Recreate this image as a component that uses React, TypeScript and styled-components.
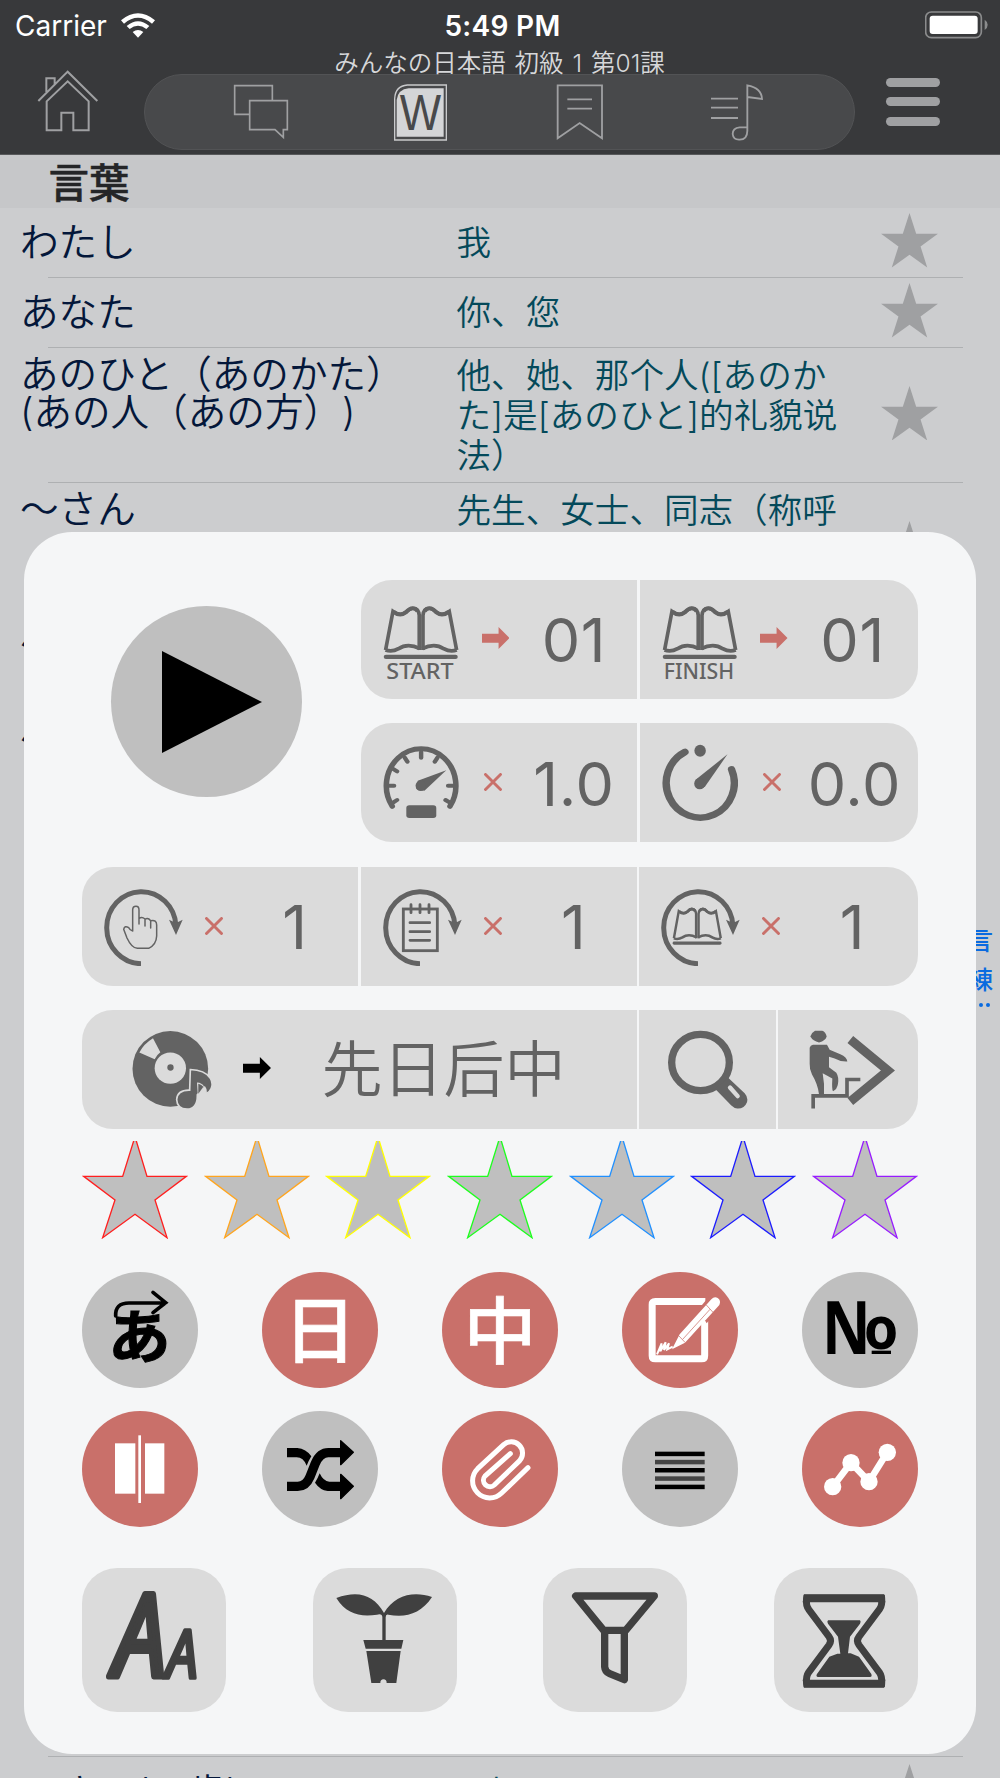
import React from 'react';
import styled, { createGlobalStyle } from 'styled-components';

const JP = `Inter, "Noto Sans CJK JP", sans-serif`;
const ZH = `Inter, "Noto Sans CJK SC", sans-serif`;
const INK = '#636363';
const TILE = '#dbdbdb';
const ACCENT = '#c9706a';

const GlobalStyle = createGlobalStyle`
  * { box-sizing: border-box; }
  body { margin: 0; background: #cccdcf; }
  svg { display: block; flex: none; }
`;

const Screen = styled.div`
  position: relative;
  width: 1000px;
  height: 1778px;
  overflow: hidden;
  background: #cccdcf;
  font-family: ${JP};
  text-spacing-trim: space-all;
`;

/* ---------- header ---------- */
const Header = styled.header`
  height: 155px;
  background: #38393b;
  border-bottom: 1px solid #58595b;
`;
const StatusBar = styled.div`
  display: grid;
  grid-template-columns: 1fr auto 1fr;
  align-items: center;
  height: 50px;
  padding: 1px 12px 0 15px;
  color: #fff;
  font-size: 28px;
`;
const Carrier = styled.div`
  display: flex;
  align-items: center;
  gap: 14px;
`;
const Clock = styled.div`
  padding-left: 2px;
  font-weight: 600;
  font-size: 28px;
  letter-spacing: 0.3px;
`;
const BatterySlot = styled.div`
  display: flex;
  justify-content: flex-end;
  padding-bottom: 2px;
`;
const NavRow = styled.div`
  display: grid;
  grid-template-columns: 144px 711px 1fr;
  height: 104px;
`;
const NavSide = styled.div<{ $left: number; $top: number }>`
  padding: ${p => p.$top}px 0 0 ${p => p.$left}px;
`;
const NavTitle = styled.div`
  height: 24px;
  line-height: 27px;
  text-align: center;
  font-size: 24.5px;
  font-weight: 350;
  word-spacing: 2px;
  color: #d6d7d9;
  white-space: nowrap;
`;
const TabPill = styled.nav`
  display: flex;
  align-items: center;
  justify-content: space-between;
  height: 76px;
  padding: 0 90px 0 87.5px;
  border: 1.5px solid #525355;
  border-radius: 38px;
  background: #48494b;
`;
const MenuBars = styled.div`
  display: flex;
  flex-direction: column;
  gap: 10.7px;
  width: 54px;
`;
const MenuBar = styled.i`
  height: 9px;
  border-radius: 5px;
  background: #9fa0a2;
`;

/* ---------- word list ---------- */
const SectionTitle = styled.h2`
  margin: 0;
  height: 52.5px;
  padding-left: 48.5px;
  line-height: 57px;
  font-size: 40.5px;
  font-weight: 500;
  -webkit-text-stroke: 0.5px #242527;
  color: #242527;
  background: #c6c7c9;
`;
const WordRow = styled.div<{ $h: number; $single?: boolean }>`
  display: grid;
  grid-template-columns: 436.5px 391.5px 1fr;
  grid-template-rows: 100%;
  align-items: ${p => (p.$single ? 'center' : 'start')};
  height: ${p => p.$h}px;
  padding: ${p => (p.$single ? '0' : '7px')} 37px ${p => (p.$single ? '0' : '7px')} 20px;
  background: linear-gradient(#aeb0b2, #aeb0b2) 48px 100% / 915px 1px no-repeat;
`;
const Kana = styled.div`
  font-size: 38.6px;
  line-height: 38.8px;
  font-weight: 350;
  color: #04173a;
  white-space: pre;
`;
const Meaning = styled.div`
  font-size: 34.6px;
  line-height: 40.4px;
  font-weight: 350;
  font-family: ${ZH};
  color: #04495a;
  white-space: pre;
`;
const RowStar = styled.div`
  align-self: center;
  justify-self: start;
  padding: 0 0 4px 33px;
`;
const SideIndex = styled.div`
  position: absolute;
  left: 968px;
  top: 922px;
  width: 26px;
  font-size: 25px;
  line-height: 39px;
  font-weight: 500;
  color: #0a6be0;
`;
const IndexMore = styled.div`
  display: flex;
  gap: 3px;
  padding: 3px 0 0 4px;
`;
const IndexDot = styled.i`
  width: 4px;
  height: 4px;
  border-radius: 50%;
  background: #0a6be0;
`;

/* ---------- control panel ---------- */
const Panel = styled.section`
  position: absolute;
  left: 24px;
  top: 531.5px;
  width: 952px;
  height: 1222px;
  padding: 48px 58px 0;
  border-radius: 48px;
  background: #f5f6f7;
`;
const TopArea = styled.div`
  display: flex;
  justify-content: space-between;
`;
const PlayButton = styled.button`
  display: block;
  width: 191px;
  height: 191px;
  margin: 26px 0 0 28.5px;
  padding: 0;
  border: 0;
  border-radius: 50%;
  background: #bfbfbf;
`;
const Stack = styled.div<{ $top?: number }>`
  display: flex;
  flex-direction: column;
  gap: 24.5px;
  margin-top: ${p => p.$top ?? 0}px;
`;
const Segments = styled.div<{ $cols: string }>`
  display: grid;
  grid-template-columns: ${p => p.$cols};
  gap: 2.5px;
  height: 119px;
  border-radius: 31px;
  overflow: hidden;
`;
const SettingCell = styled.div`
  display: grid;
  grid-template-columns: 102px 64px 92px;
  align-items: center;
  background: ${TILE};
`;
const IconSlot = styled.div`
  padding-left: 22px;
`;
const OpSlot = styled.div<{ $arrow?: boolean }>`
  display: flex;
  justify-content: center;
  padding: ${p => (p.$arrow ? '0 0 3px 1px' : '0 4px 1px 0')};
`;
const Value = styled.div`
  text-align: center;
  font-size: 61px;
  font-weight: 400;
  line-height: 70px;
  padding: 2px 0 0 2px;
  letter-spacing: 0.7px;
  color: ${INK};
  white-space: nowrap;
`;
const OrderCell = styled.div`
  display: flex;
  align-items: center;
  padding-left: 49.5px;
  background: ${TILE};
`;
const OrderArrow = styled.div`
  margin: 0 51px 3px 31px;
`;
const OrderText = styled.div`
  font-family: ${ZH};
  font-size: 61px;
  font-weight: 350;
  line-height: 70px;
  color: ${INK};
`;
const ToolCell = styled.div`
  display: flex;
  align-items: center;
  justify-content: center;
  background: ${TILE};
`;
const StarRow = styled.div`
  display: flex;
  justify-content: space-between;
  margin-top: 12px;
`;
const ToggleGrid = styled.div`
  display: grid;
  grid-template-columns: repeat(5, 116px);
  justify-content: space-between;
  row-gap: 23.3px;
  margin-top: 33px;
`;
const Toggle = styled.button<{ $on?: boolean }>`
  display: flex;
  align-items: center;
  justify-content: center;
  width: 116px;
  height: 116px;
  padding: 0;
  border: 0;
  border-radius: 50%;
  background: ${p => (p.$on ? ACCENT : '#bfbfbf')};
`;
const Glyph = styled.span<{ $cn?: boolean }>`
  margin-bottom: ${p => (p.$cn ? 8 : 10)}px;
  font-family: ${p => (p.$cn ? '"Noto Sans CJK SC"' : '"Noto Sans CJK JP"')}, sans-serif;
  font-size: 73px;
  font-weight: 500;
  line-height: 74px;
  -webkit-text-stroke: 0.6px #fff;
  color: #fff;
`;
const ToolRow = styled.div`
  display: flex;
  justify-content: space-between;
  margin-top: 40.5px;
`;
const ToolTile = styled.button`
  width: 144px;
  height: 144px;
  padding: 0;
  border: 0;
  border-radius: 35px;
  background: ${TILE};
`;

/* ---------- drawings ---------- */
const StarShape = ({ w, h, fill }: { w: number; h: number; fill: string }) => (
  <svg width={w} height={h} viewBox="0 0 170 163">
    <path fill={fill} d="M85 0L105 62H170L118 100L138 163L85 125L32 163L52 100L0 62H65Z" />
  </svg>
);

const BookPages = () => (
  <g fill="none" stroke={INK}>
    {[undefined, 'translate(382 0) scale(-1 1)'].map((t, i) => (
      <g key={i} transform={t}>
        <path strokeWidth="10" d="M186 240V136Q184 114 168 115Q160 116 150 126Q134 140 115 124L95 240" />
        <path strokeWidth="12" d="M116 125Q134 141 150 127Q160 115 168 115Q177 115 182 124" />
        <path strokeWidth="11" strokeLinejoin="round" d="M95 240Q112 247 130 236Q155 218 188 236" />
      </g>
    ))}
    <rect x="90" y="254" width="200" height="13" rx="6" fill={INK} stroke="none" />
  </g>
);

const BookIcon = ({ label, len }: { label: string; len: number }) => (
  <svg width="76" height="80" viewBox="88 87 205.4 240" preserveAspectRatio="none">
    <BookPages />
    <text x="188" y="326" textAnchor="middle" textLength={len} lengthAdjust="spacingAndGlyphs"
      fontFamily="Noto Sans" fontWeight="500" fontSize="66" fill={INK}>{label}</text>
  </svg>
);

const GaugeIcon = () => (
  <svg width="76" height="80" viewBox="88 517 205.4 240" preserveAspectRatio="none">
    <g fill="none" stroke={INK} strokeLinecap="round">
      <path strokeWidth="15" d="M113 707A94 111 0 1 1 269 707" />
      <path strokeWidth="12" d="M105 645H118M264 645H277M191 545V561M147 561L154 573M235 561L228 573M114 594L126 602M115 696L126 688M257 688L269 696" />
    </g>
    <path fill={INK} d="M259 599L182 630L178 655L200 660Z" />
    <ellipse cx="190" cy="645" rx="14" ry="16" fill={INK} />
    <rect x="151" y="704" width="81" height="38" rx="8" fill={INK} />
  </svg>
);

const TimerIcon = () => (
  <svg width="76" height="80" viewBox="842 517 205.4 240" preserveAspectRatio="none">
    <path fill="none" stroke={INK} strokeWidth="20" strokeLinecap="round" d="M904 544A92 104 0 1 0 1030 596" />
    <ellipse cx="945" cy="540" rx="15.5" ry="18" fill={INK} />
    <path fill={INK} d="M1019 551L932 628L944 655L958 648Z" />
    <ellipse cx="944" cy="639" rx="15" ry="17" fill={INK} />
  </svg>
);

const LoopIcon = ({ children }: { children: React.ReactNode }) => (
  <svg width="80" height="80" viewBox="132 108 240 240">
    <path fill="none" stroke={INK} strokeWidth="15" d="M243 341A104 108 0 1 1 348 228" />
    <path fill={INK} d="M327 209L348 219L368 209L348 255Z" />
    {children}
  </svg>
);

const HandDrawing = () => (
  <path fill="none" stroke={INK} strokeWidth="4.5" strokeLinejoin="round" strokeLinecap="round"
    d="M218 243V180Q218 169 228 169Q237 169 237 180V222M237 206Q245 199 255 207V228M255 208Q264 202 272 212V234M272 212Q290 208 290 225V258Q289 284 266 295H232Q215 294 201 264L191 238Q194 225 206 233Q210 241 218 243" />
);
const NotepadDrawing = () => (
  <g fill="none" stroke={INK} strokeWidth="8.5" strokeLinecap="round">
    <rect x="193" y="177" width="102" height="125" />
    <path d="M216 164V188M243 164V188M270 164V188M213 218H272M213 245H272M213 271H272" />
  </g>
);
const SmallBookDrawing = () => (
  <g transform="translate(101 96) scale(.733 .704)"><BookPages /></g>
);

const Cross = () => (
  <svg width="18" height="18" viewBox="0 0 18 18">
    <path d="M1.5 1.5L16.5 16.5M16.5 1.5L1.5 16.5" stroke={ACCENT} strokeWidth="2.9" strokeLinecap="round" />
  </svg>
);
const Arrow = ({ color, w }: { color: string; w: number }) => (
  <svg width={w} height="22" viewBox="0 0 83 66" preserveAspectRatio="none">
    <path fill={color} d="M0 20H50V0L83 33L50 66V47H0Z" />
  </svg>
);

const DiscIcon = () => (
  <svg width="80" height="80" viewBox="214 538.5 240 240">
    <circle cx="329" cy="655" r="113.5" fill={INK} />
    <circle cx="329" cy="653" r="47" fill={TILE} />
    <circle cx="329.5" cy="651" r="9.5" fill={INK} />
    <path fill={TILE} d="M236 606Q249 580 277 563L299 605Q288 613 282 626Z" />
    <path fill={INK} stroke={TILE} strokeWidth="5"
      d="M389 657Q432 658 449 683Q458 699 452 713Q448 724 435 731Q438 718 432 710L410 733Q411 775 379 776Q349 775 348 747Q350 718 387 719Z" />
    <path fill={TILE} d="M409 696Q424 697 430 708Q426 716 413 732L411 730Z" />
    <path fill={INK} d="M413 700Q423 703 428 709L413 730Z" />
  </svg>
);

const SearchIcon = () => (
  <svg width="80" height="80" viewBox="504 538.5 240 240">
    <ellipse cx="601.5" cy="636" rx="86.5" ry="84.5" fill="none" stroke={INK} strokeWidth="22" />
    <path fill={INK} d="M645 715Q668 700 683 680L734 728Q745 740 741 755Q733 775 712 774Q702 773 694 765Z" />
    <path stroke={TILE} strokeWidth="13" strokeLinecap="round" d="M690 711L713 737" />
  </svg>
);

const StairsIcon = () => (
  <svg width="93" height="80" viewBox="905 538.5 279 240">
    <path fill={INK} d="M944 541H966Q976 545 979 558Q976 570 956 576Q938 572 930 558Q934 546 944 541Z" />
    <path fill={INK} d="M928 592Q930 584 938 583H980L988 598L1020 611Q1040 620 1041 633Q1020 634 1003 624L986 619V650L1008 667Q1016 680 1013 700Q1010 718 998 722Q994 718 996 684L967 668Q973 700 971 731H956Q952 700 935 672Q927 655 928 640Z" />
    <path fill="none" stroke={INK} strokeWidth="11" d="M938.5 774V736H1040V687H1080" />
    <path fill="none" stroke={INK} strokeWidth="27" d="M1050 567L1163 660L1050 753" />
  </svg>
);

const RatingStar = ({ color }: { color: string }) => (
  <svg width="106" height="98" viewBox="66 33 318 294">
    <path fill="#bfbfbf" stroke={color} strokeWidth="4"
      d="M225 20L261 139H379L285 210L321 323L225 253L128 323L165 210L71 139H188Z" />
  </svg>
);

const ChatIcon = () => (
  <svg width="56" height="56" viewBox="698 252 168 168" fill="none" stroke="#9fa0a2" strokeWidth="5">
    <path d="M748 343H703V257H816V301M748 302H861V389H849V412L824 389H748Z" />
  </svg>
);
const WordsIcon = () => (
  <svg width="56" height="57" viewBox="1182 252 168 171">
    <path fill="none" stroke="#c9cacc" strokeWidth="4" d="M1184 420V296Q1186 258 1222 255H1339V420Z" />
    <path fill="#d4d5d7" d="M1190 410V300Q1194 268 1226 265H1331V410Z" />
    <text x="1261" y="389" textAnchor="middle" textLength="124" lengthAdjust="spacingAndGlyphs"
      fontFamily="Liberation Sans" fontSize="148" fill="#48494b">W</text>
  </svg>
);
const BookmarkIcon = () => (
  <svg width="48" height="57" viewBox="168 252 144 171" fill="none" stroke="#9fa0a2" strokeWidth="5.5">
    <path d="M173 256H306V415L239 369L173 415ZM202 298H276M202 326H276" />
  </svg>
);
const MusicIcon = () => (
  <svg width="54" height="57" viewBox="633 250 162 171" fill="none" stroke="#9fa0a2" strokeWidth="5.5">
    <path d="M636 294H717M636 321H717M636 352H717M745 392V254Q788 262 789 295L745 289M745 380H722Q701 382 701 400Q703 418 722 417Q745 416 745 390" />
  </svg>
);
const HomeIcon = () => (
  <svg width="62" height="62" viewBox="110 208 186 186" fill="none" stroke="#9fa0a2" strokeWidth="6">
    <path d="M114 301L202 213L291 301M138 274V233H163V250M139 389V302L202 242L265 302V389H219V336H183V389Z" />
  </svg>
);

const WifiIcon = () => (
  <svg width="34" height="25" viewBox="362 35 102 75" fill="#fff">
    <path d="M362 57Q413 15 464 57L455 67Q413 32 371 67Z" />
    <path d="M379 74Q413 46 447 74L438 83Q413 63 388 83Z" />
    <path d="M397 92Q413 80 429 92L413 109Z" />
  </svg>
);
const BatteryIcon = () => (
  <svg width="63" height="28" viewBox="1275 31 189 84">
    <rect x="1277" y="34" width="167" height="77" rx="17" fill="none" stroke="#8b8c8d" strokeWidth="5" />
    <rect x="1289" y="45" width="144" height="55" rx="9" fill="#fff" />
    <path d="M1454 57Q1463 63 1463 72Q1463 82 1454 88Z" fill="#8b8c8d" />
  </svg>
);

const PlayIcon = () => (
  <svg width="191" height="191" viewBox="0 0 191 191"><path d="M51 45L151 96L51 147Z" /></svg>
);

const FuriganaIcon = () => (
  <svg width="116" height="116" viewBox="66 426 348 348">
    <text x="238" y="684" textAnchor="middle" textLength="188" lengthAdjust="spacingAndGlyphs"
      fontFamily="Noto Sans CJK JP" fontWeight="700" fontSize="175" stroke="#000" strokeWidth="3">あ</text>
    <path fill="none" stroke="#000" strokeWidth="11" strokeLinecap="round" d="M167 558Q165 519 207 519H316M279 487L317 518L279 548" />
  </svg>
);
const WriteIcon = () => (
  <svg width="116" height="116" viewBox="306 426 348 348">
    <path fill="none" stroke="#fff" strokeWidth="21" d="M556 514.5H406Q396.5 514.5 396.5 524V677Q396.5 686.5 406 686.5H545Q554 686.5 554 677V572" />
    <path fill={ACCENT} d="M535 538L569 498L610 520L560 580Z" />
    <path fill="#fff" d="M479 613L574 508Q583 498 593 504Q604 511 598 525L495 638L456 658Z" />
    <path fill="none" stroke={ACCENT} strokeWidth="2.2" d="M559 525L580 548M476 617L496 638M488 628L570 538" />
    <path fill="none" stroke="#fff" strokeWidth="6" d="M411 673L425 640L421 664L437 637L432 660L447 640L442 658L458 650" />
  </svg>
);
const NumeroIcon = () => (
  <svg width="116" height="116" viewBox="846 426 348 348" fontFamily="Noto Sans" fontWeight="700">
    <text x="906" y="672" fontSize="218" textLength="146" lengthAdjust="spacingAndGlyphs">N</text>
    <text x="1031" y="656" fontSize="180" textLength="104" lengthAdjust="spacingAndGlyphs">o</text>
    <rect x="1055" y="662" width="58" height="10" />
  </svg>
);
const SplitIcon = () => (
  <svg width="116" height="116" viewBox="66 843 348 348" fill="#fff">
    <rect x="165" y="940" width="61" height="151" />
    <rect x="235" y="916" width="8" height="203" />
    <rect x="255" y="940" width="58" height="151" />
  </svg>
);
const ShuffleIcon = () => (
  <svg width="116" height="116" viewBox="606 843 348 348">
    <path d="M681 954H712Q738 956 754 979Q746 992 740 1007Q730 982 710 982H681ZM779 1030Q790 1054 808 1055H840V1083H803Q780 1080 765 1058Q773 1046 779 1030Z" />
    <path fill="none" stroke="#000" strokeWidth="28" d="M681 1069H713Q738 1069 750 1040L766 1000Q780 968 805 968H842" />
    <path strokeLinejoin="round" stroke="#000" strokeWidth="4" d="M842 932L880 967L842 1004ZM842 1033L880 1069L842 1106Z" />
  </svg>
);
const ClipIcon = () => (
  <svg width="116" height="116" viewBox="1146 843 348 348" fill="none" stroke="#fff" strokeLinecap="round">
    <path strokeWidth="15" d="M1404 1013L1325 1089A51 51 0 0 1 1253 1016L1331 944A34 34 0 0 1 1379 992L1303 1065A19.5 19.5 0 0 1 1275 1038L1351 971" />
  </svg>
);
const LinesIcon = () => (
  <svg width="116" height="116" viewBox="306 843 348 348">
    {[965, 989.5, 1014, 1039, 1064].map((y, i) => (
      <rect key={y} x="405" y={y} width="149" height="13.5" fill={i % 2 ? '#444' : '#000'} />
    ))}
  </svg>
);
const ChartIcon = () => (
  <svg width="116" height="116" viewBox="846 843 348 348" fill="#fff">
    <path fill="none" stroke="#fff" strokeWidth="20" d="M938 1070L993 998L1047 1055L1102 967" />
    <circle cx="938" cy="1070" r="26" /><circle cx="993" cy="998" r="26" />
    <circle cx="1047" cy="1055" r="26" /><circle cx="1102" cy="967" r="26" />
  </svg>
);

const FontSizeIcon = () => (
  <svg width="144" height="144" viewBox="246 84 432 432" fill="#404040" stroke="#404040" strokeLinejoin="round"
    fontFamily="Noto Sans" fontStyle="italic" fontWeight="400">
    <text x="341" y="411" fontSize="344" strokeWidth="18" textLength="158" lengthAdjust="spacingAndGlyphs">A</text>
    <text x="499" y="413" fontSize="202" strokeWidth="11" textLength="95" lengthAdjust="spacingAndGlyphs">A</text>
  </svg>
);
const PlantIcon = () => (
  <svg width="144" height="144" viewBox="938 84 432 432" fill="#404040">
    <path d="M1008 174C1075 150 1120 165 1151 219C1182 165 1240 152 1295 171C1262 222 1215 234 1164 224Q1156 222 1156 232V301H1146V232Q1146 220 1130 224C1080 232 1038 222 1008 174Z" />
    <path d="M1089 300H1209L1203 326H1096ZM1098 333H1201L1188 429H1159A9.5 11 0 0 0 1140 429H1113Z" />
  </svg>
);
const FunnelIcon = () => (
  <svg width="144" height="144" viewBox="130 84 432 432" fill="none" stroke="#404040" strokeWidth="22" strokeLinejoin="round">
    <path d="M228 168H464L378 271H312Z" />
    <path d="M315 271V380Q316 395 330 401L374 419V271" />
  </svg>
);
const HourglassIcon = () => (
  <svg width="144" height="144" viewBox="822 84 432 432" fill="#404040">
    <path fill="none" stroke="#404040" strokeWidth="21"
      d="M920 175H1145Q1147 196 1139 207L1077 290Q1068 302 1077 315L1138 397Q1147 410 1145 431H920Q917 410 926 397L987 315Q996 302 987 290L926 208Q917 197 920 175Z" />
    <path d="M912 163H1152L1156 187H908ZM908 419H1156L1152 443H912Z" />
    <path d="M984 241H1080Q1084 245 1080 251L1050 290L1044 340H1052L1077 350L1114 402Q1117 411 1110 411H953Q947 409 951 402L988 350L1012 341H1021L1014 290L984 251Q980 245 984 241Z" />
  </svg>
);

/* ---------- data ---------- */
const words = [
  { ja: 'わたし', zh: '我', h: 70, single: true },
  { ja: 'あなた', zh: '你、您', h: 70, single: true },
  { ja: 'あのひと（あのかた）\n(あの人（あの方）)', zh: '他、她、那个人([あのか\nた]是[あのひと]的礼貌说\n法）', h: 135.3 },
  { ja: '～さん', zh: '先生、女士、同志（称呼', h: 135 },
  { ja: '～ちゃん', zh: '', h: 95 },
  { ja: '～じん(～人)', zh: '', h: 1044.7 },
  { ja: '～さい(～歳)', zh: '~岁', h: 71, single: true },
];
const stars = ['#ff1f1f', '#ffa51e', '#ffff00', '#1dff1d', '#2090ff', '#1c1cff', '#981cff'];
const loops = [HandDrawing, NotepadDrawing, SmallBookDrawing];

const Setting = ({ icon, arrow, value }: { icon: React.ReactNode; arrow?: boolean; value: string }) => (
  <SettingCell>
    <IconSlot>{icon}</IconSlot>
    <OpSlot $arrow={arrow}>{arrow ? <Arrow color={ACCENT} w={27.5} /> : <Cross />}</OpSlot>
    <Value>{value}</Value>
  </SettingCell>
);

export default function App() {
  return (
    <Screen>
      <GlobalStyle />
      <Header>
        <StatusBar>
          <Carrier>Carrier<WifiIcon /></Carrier>
          <Clock>5:49 PM</Clock>
          <BatterySlot><BatteryIcon /></BatterySlot>
        </StatusBar>
        <NavRow>
          <NavSide $left={36.5} $top={19.5}><HomeIcon /></NavSide>
          <div>
            <NavTitle>みんなの日本語 初級 1 第01課</NavTitle>
            <TabPill><ChatIcon /><WordsIcon /><BookmarkIcon /><MusicIcon /></TabPill>
          </div>
          <NavSide $left={31} $top={27.5}>
            <MenuBars><MenuBar /><MenuBar /><MenuBar /></MenuBars>
          </NavSide>
        </NavRow>
      </Header>

      <SectionTitle>言葉</SectionTitle>
      {words.map(w => (
        <WordRow key={w.ja} $h={w.h} $single={w.single}>
          <Kana>{w.ja}</Kana>
          <Meaning>{w.zh}</Meaning>
          <RowStar><StarShape w={57} h={54.5} fill="#9fa0a2" /></RowStar>
        </WordRow>
      ))}
      <SideIndex>
        言<br />練
        <IndexMore><IndexDot /><IndexDot /><IndexDot /></IndexMore>
      </SideIndex>

      <Panel>
        <TopArea>
          <PlayButton><PlayIcon /></PlayButton>
          <Stack>
            <Segments $cols="276.2px 278.3px">
              <Setting icon={<BookIcon label="START" len={182} />} arrow value="01" />
              <Setting icon={<BookIcon label="FINISH" len={190} />} arrow value="01" />
            </Segments>
            <Segments $cols="276.2px 278.3px">
              <Setting icon={<GaugeIcon />} value="1.0" />
              <Setting icon={<TimerIcon />} value="0.0" />
            </Segments>
          </Stack>
        </TopArea>
        <Stack $top={24.5}>
          <Segments $cols="276.3px 276.2px 1fr">
            {loops.map((Drawing, i) => (
              <Setting key={i} icon={<LoopIcon><Drawing /></LoopIcon>} value="1" />
            ))}
          </Segments>
          <Segments $cols="554.7px 136.7px 1fr">
            <OrderCell>
              <DiscIcon />
              <OrderArrow><Arrow color="#000" w={28} /></OrderArrow>
              <OrderText>先日后中</OrderText>
            </OrderCell>
            <ToolCell><SearchIcon /></ToolCell>
            <ToolCell><StairsIcon /></ToolCell>
          </Segments>
        </Stack>
        <StarRow>{stars.map(c => <RatingStar key={c} color={c} />)}</StarRow>
        <ToggleGrid>
          <Toggle><FuriganaIcon /></Toggle>
          <Toggle $on><Glyph>日</Glyph></Toggle>
          <Toggle $on><Glyph $cn>中</Glyph></Toggle>
          <Toggle $on><WriteIcon /></Toggle>
          <Toggle><NumeroIcon /></Toggle>
          <Toggle $on><SplitIcon /></Toggle>
          <Toggle><ShuffleIcon /></Toggle>
          <Toggle $on><ClipIcon /></Toggle>
          <Toggle><LinesIcon /></Toggle>
          <Toggle $on><ChartIcon /></Toggle>
        </ToggleGrid>
        <ToolRow>
          <ToolTile><FontSizeIcon /></ToolTile>
          <ToolTile><PlantIcon /></ToolTile>
          <ToolTile><FunnelIcon /></ToolTile>
          <ToolTile><HourglassIcon /></ToolTile>
        </ToolRow>
      </Panel>
    </Screen>
  );
}
